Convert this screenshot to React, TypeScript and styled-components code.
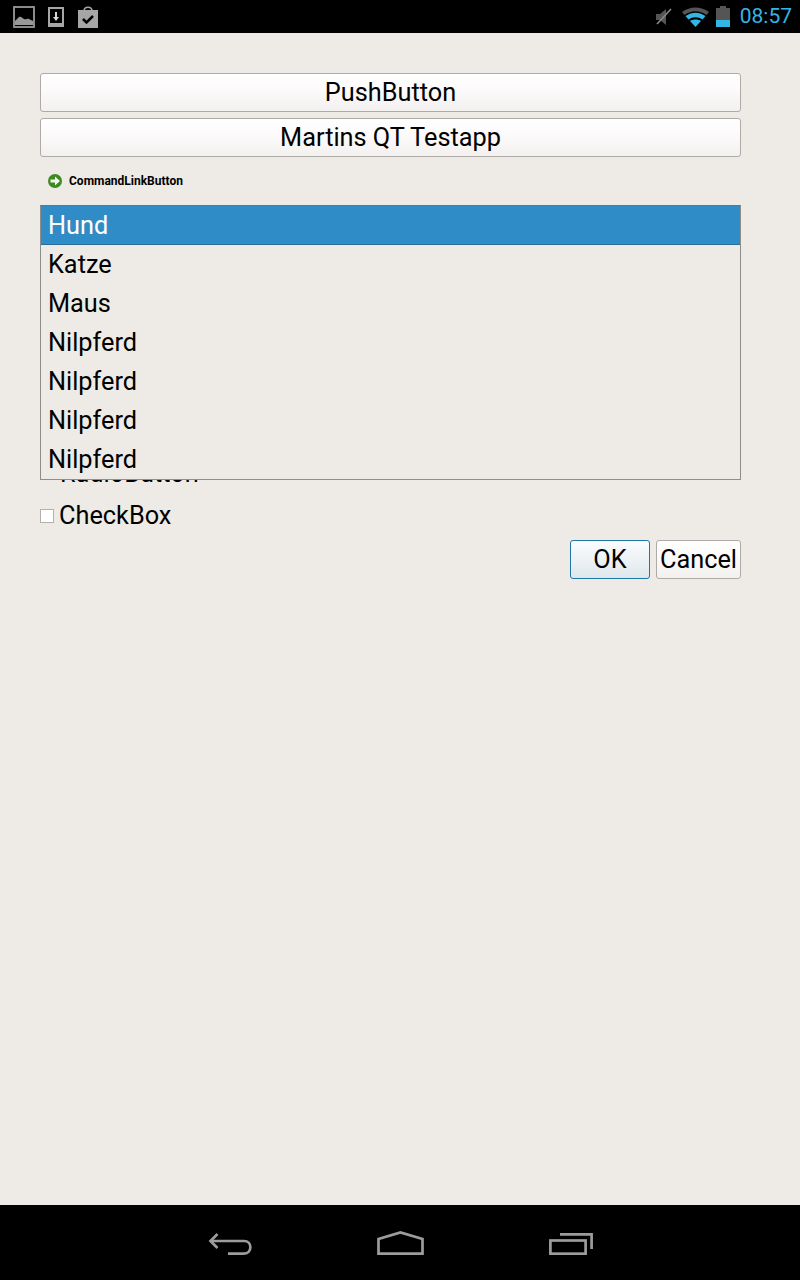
import React from 'react';
import styled, { createGlobalStyle } from 'styled-components';

const GlobalStyle = createGlobalStyle`
    html, body {
        margin: 0;
        padding: 0;
        background: #eeebe6;
    }
    body {
        font-family: Roboto, "Liberation Sans", sans-serif;
    }
`;

const Screen = styled.div`
    width: 800px;
    height: 1280px;
    display: flex;
    flex-direction: column;
    background: #eeebe6;
    overflow: hidden;
`;

const StatusBar = styled.div`
    height: 33px;
    flex: none;
    background: #000;
    display: flex;
    align-items: center;
    justify-content: space-between;
    padding: 0 8px 0 13px;
`;

const StatusGroup = styled.div<{ $gap: number }>`
    display: flex;
    align-items: center;
    gap: ${(p) => p.$gap}px;
`;

const Clock = styled.span`
    font-size: 21px;
    color: #33b5e5;
    line-height: 33px;
    margin-left: 3px;
`;

const Content = styled.main`
    flex: 1;
    padding: 40px 59px 0 40px;
    display: flex;
    flex-direction: column;
`;

const PushButton = styled.button<{ $primary?: boolean }>`
    height: 39px;
    box-sizing: border-box;
    padding: 0;
    border: 1px solid ${(p) => (p.$primary ? '#1f77a8' : '#aeaaa6')};
    border-radius: 3px;
    background: ${(p) =>
        p.$primary
            ? 'linear-gradient(#fbfcfd, #dfe8ed)'
            : 'linear-gradient(#ffffff 0%, #fdfbfb 35%, #f3f0f0 100%)'};
    color: #000;
    font-family: inherit;
    font-size: 25.3px;
    line-height: 37px;
    text-align: center;
`;

const WideButton = styled(PushButton)`
    display: block;
    width: 100%;
    margin-bottom: 6px;
`;

const CommandLink = styled.div`
    height: 36px;
    margin-bottom: 6px;
    display: flex;
    align-items: center;
    gap: 7px;
    padding-left: 8px;
    font-size: 12px;
    font-weight: 700;
    color: #000;
`;

const ListBox = styled.ul`
    position: relative;
    z-index: 1;
    list-style: none;
    margin: 0;
    padding: 0;
    height: 275px;
    box-sizing: border-box;
    border: 1px solid #8f8d8a;
    border-top-color: #4f7c9c;
    background: #eeebe6;
`;

const ListRow = styled.li<{ $selected?: boolean }>`
    height: 39px;
    box-sizing: border-box;
    padding-left: 7px;
    font-size: 25.3px;
    line-height: 40px;
    color: ${(p) => (p.$selected ? '#fff' : '#000')};
    background: ${(p) => (p.$selected ? '#308cc6' : 'transparent')};
    border-bottom: ${(p) => (p.$selected ? '1px solid #2a6f9c' : 'none')};
`;

const RadioRow = styled.div`
    height: 32px;
    margin-top: -19px;
    padding-left: 20px;
    font-size: 25.3px;
    line-height: 26px;
    color: #000;
`;

const CheckRow = styled.label`
    display: flex;
    align-items: center;
    gap: 5px;
    height: 39px;
    margin-top: 3px;
    font-size: 25.3px;
    color: #000;
`;

const CheckMark = styled.span`
    width: 14px;
    height: 14px;
    box-sizing: border-box;
    border: 1px solid #b4b1ad;
    background: #fff;
`;

const DialogActions = styled.div`
    display: flex;
    justify-content: flex-end;
    gap: 6px;
    margin-top: 5px;
`;

const OkButton = styled(PushButton)`
    width: 80px;
`;

const CancelButton = styled(PushButton)`
    width: 85px;
`;

const NavBar = styled.nav`
    height: 75px;
    flex: none;
    background: #000;
    display: flex;
    justify-content: center;
    align-items: flex-end;
    padding: 0 0 25px 1px;
    box-sizing: border-box;
    gap: 125px;
`;

const MuteSvg = styled.svg`
    margin-right: 3px;
`;

const GalleryIcon = () => (
    <svg width="22" height="22" viewBox="0 0 22 22">
        <rect x="1" y="1" width="20" height="20" fill="none" stroke="#999" strokeWidth="1.8" />
        <path d="M2 19 V15 L6 11 C8 10 9 12 11 13 C13 14 15 12 16 13 L20 15 V19 Z" fill="#999" />
    </svg>
);

const DownloadIcon = () => (
    <svg width="16" height="22" viewBox="0 0 16 22">
        <path fillRule="evenodd" d="M0 1 H16 V21 H0 Z M2 3 V17 H14 V3 Z" fill="#a6a6a6" />
        <path d="M7 6 H9 V11 H11 L8 15 L5 11 H7 Z" fill="#d8d8d8" />
    </svg>
);

const BagIcon = () => (
    <svg width="22" height="24" viewBox="0 0 22 24">
        <path d="M7 6 C7 1 15 1 15 6" fill="none" stroke="#a6a6a6" strokeWidth="1.5" />
        <path d="M1 5 H21 V23 H1 Z" fill="#a6a6a6" />
        <path d="M6 14 L9.5 17.5 L16 11" fill="none" stroke="#000" strokeWidth="2.5" />
    </svg>
);

const MuteIcon = () => (
    <MuteSvg width="18" height="20" viewBox="0 0 18 20">
        <path d="M2 7 H6 L12 2 V18 L6 13 H2 Z" fill="#555" />
        <path d="M3 17 L17 2" stroke="#8a8a8a" strokeWidth="1.6" />
    </MuteSvg>
);

const WifiIcon = () => (
    <svg width="27" height="20" viewBox="0 0 27 20">
        <path d="M0 5 C8 -1 19 -1 27 5 L24.5 8 C17 3 10 3 2.500 8 Z" fill="#555" />
        <path d="M3.500 9 C10 4.500 17 4.500 23.500 9 L20.500 12.500 C16 9.500 11 9.500 6.500 12.500 Z" fill="#33b5e5" />
        <path d="M8 14 C11 12 16 12 19 14 L13.500 20 Z" fill="#33b5e5" />
    </svg>
);

const BatteryIcon = () => (
    <svg width="14" height="21" viewBox="0 0 14 21">
        <path d="M4 0 H10 V2 H14 V14 H0 V2 H4 Z" fill="#555" />
        <rect x="0" y="14" width="14" height="7" fill="#33b5e5" />
    </svg>
);

const GoArrowIcon = () => (
    <svg width="14" height="14" viewBox="0 0 14 14">
        <circle cx="7" cy="7" r="7" fill="#3d8a1e" />
        <path d="M2.500 5.500 H7 V2.500 L12 7 L7 11.500 V8.500 H2.500 Z" fill="#f2f8ec" />
    </svg>
);

const BackIcon = () => (
    <svg width="44" height="22" viewBox="0 0 44 22" fill="none" stroke="#9c9c9c" strokeWidth="2.7">
        <path d="M9.500 1 L2.500 8 L9.500 15" />
        <path d="M2.500 8 H36 C44.500 8 44.500 20.600 36 20.600 H20" />
    </svg>
);

const HomeIcon = () => (
    <svg width="47" height="24" viewBox="0 0 47 24" fill="none" stroke="#9c9c9c" strokeWidth="2.7">
        <path d="M1.500 22.600 V8 L23.500 1.500 L45.500 8 V22.600 Z" />
    </svg>
);

const RecentsIcon = () => (
    <svg width="44" height="22" viewBox="0 0 44 22" fill="none" stroke="#9c9c9c" strokeWidth="2.7">
        <rect x="1.400" y="7.500" width="35.200" height="13.200" />
        <path d="M11 1.400 H42.600 V16" />
    </svg>
);

const animals = ['Hund', 'Katze', 'Maus', 'Nilpferd', 'Nilpferd', 'Nilpferd', 'Nilpferd'];

const App: React.FC = () => (
    <Screen>
        <GlobalStyle />
        <StatusBar>
            <StatusGroup $gap={13}>
                <GalleryIcon />
                <DownloadIcon />
                <BagIcon />
            </StatusGroup>
            <StatusGroup $gap={7}>
                <MuteIcon />
                <WifiIcon />
                <BatteryIcon />
                <Clock>08:57</Clock>
            </StatusGroup>
        </StatusBar>
        <Content>
            <WideButton>PushButton</WideButton>
            <WideButton>Martins QT Testapp</WideButton>
            <CommandLink>
                <GoArrowIcon />
                CommandLinkButton
            </CommandLink>
            <ListBox>
                {animals.map((name, index) => (
                    <ListRow key={index} $selected={index === 0}>
                        {name}
                    </ListRow>
                ))}
            </ListBox>
            <RadioRow>RadioButton</RadioRow>
            <CheckRow>
                <CheckMark />
                CheckBox
            </CheckRow>
            <DialogActions>
                <OkButton $primary>OK</OkButton>
                <CancelButton>Cancel</CancelButton>
            </DialogActions>
        </Content>
        <NavBar>
            <BackIcon />
            <HomeIcon />
            <RecentsIcon />
        </NavBar>
    </Screen>
);

export default App;
